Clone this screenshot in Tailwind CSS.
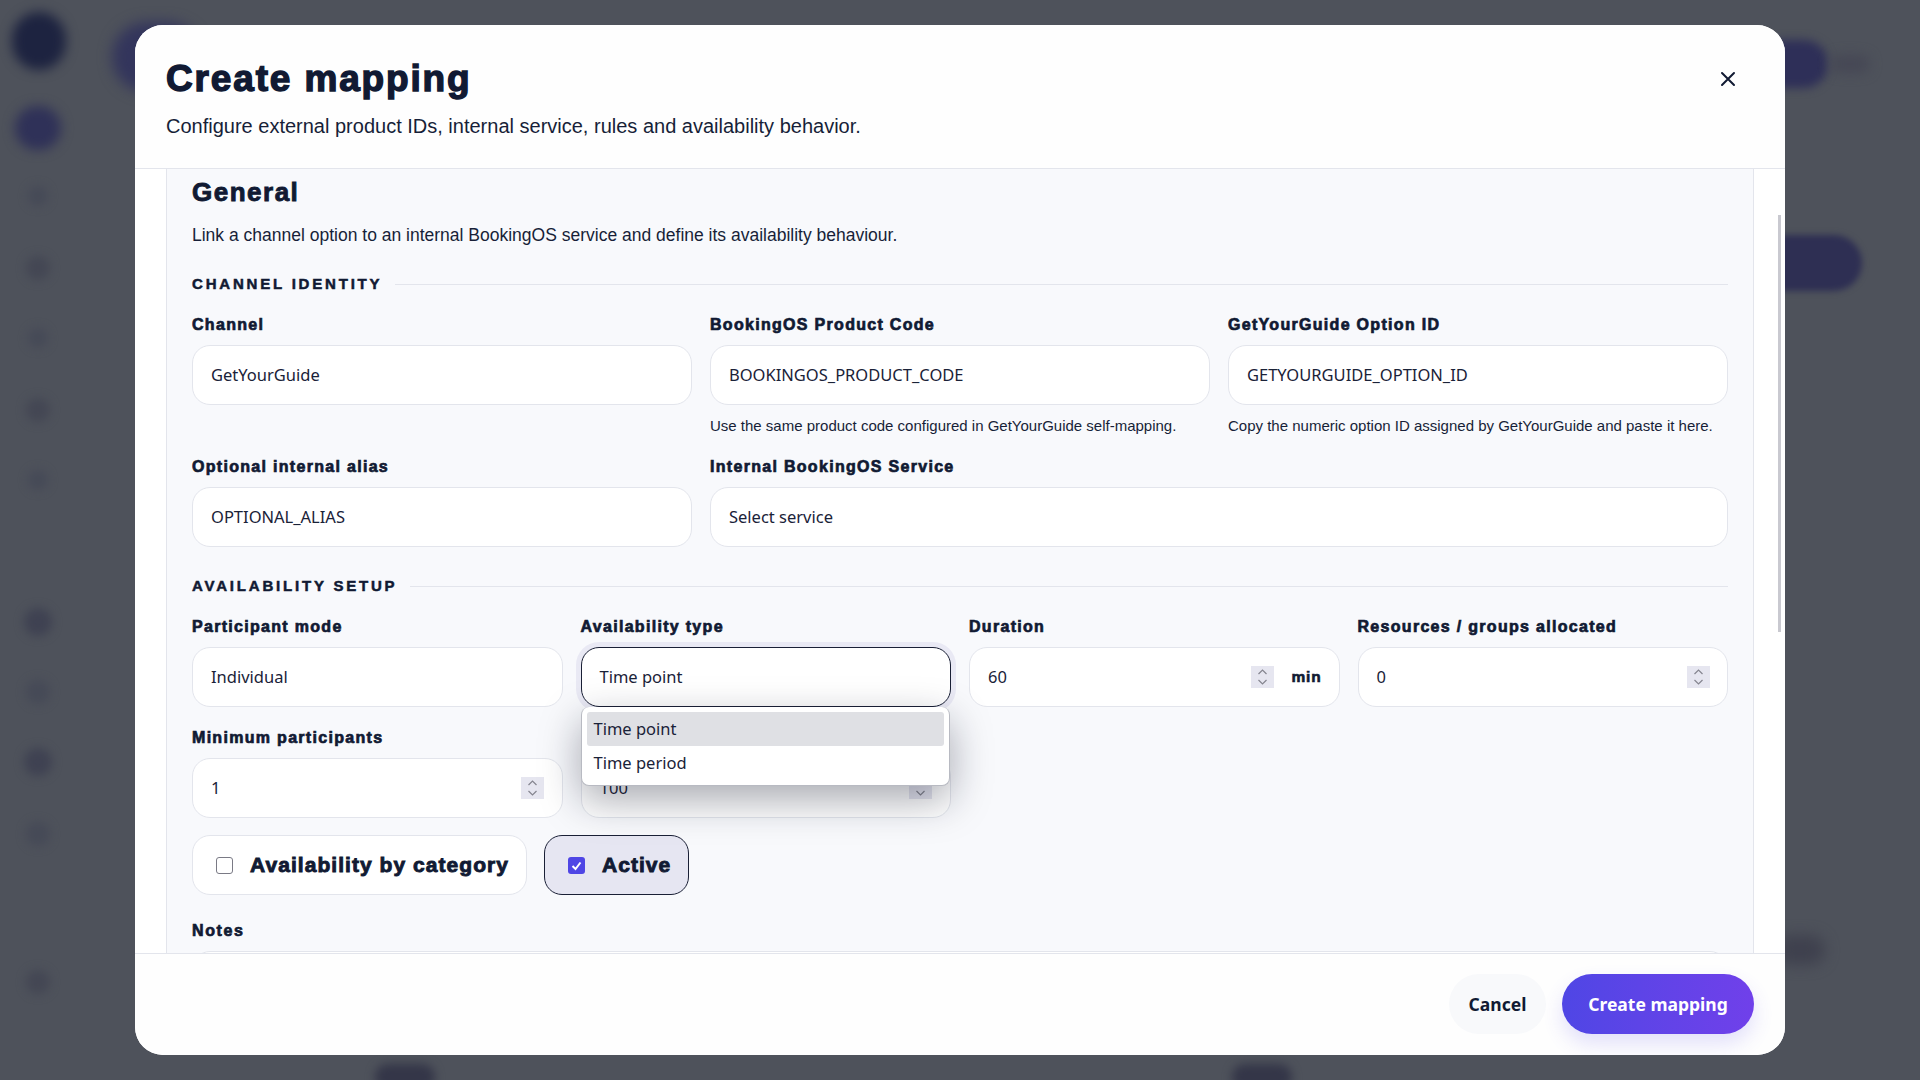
<!DOCTYPE html>
<html lang="en">
<head>
  <meta charset="UTF-8">
  <title>Create mapping</title>
  <script src="https://cdn.jsdelivr.net/npm/@tailwindcss/browser@4"></script>
</head>
<body class="bg-[#4e525b]">
  <div class="relative w-[1920px] h-[1080px] overflow-hidden font-['Liberation_Sans',sans-serif] text-[#111a33]">

    <!-- blurred page behind the modal -->
    <div class="absolute left-[12px] top-[12px] w-[54px] h-[58px] rounded-full bg-[#1d2340] blur-[6px]"></div>
    <div class="absolute left-[15px] top-[106px] w-[46px] h-[44px] rounded-full bg-[#2f3158] blur-[6px]"></div>
    <div class="absolute left-[112px] top-[22px] w-[90px] h-[70px] rounded-full bg-[#33355c] blur-[7px]"></div>
    <div class="absolute left-[1760px] top-[40px] w-[68px] h-[48px] rounded-full bg-[#2e2f58] blur-[5px]"></div>
    <div class="absolute left-[1700px] top-[235px] w-[162px] h-[56px] rounded-full bg-[#2e2f53] blur-[3px]"></div>
    <div class="absolute left-[1830px] top-[55px] w-[40px] h-[18px] rounded-full bg-[#464855] blur-[6px]"></div>
    <div class="absolute left-[1775px] top-[935px] w-[50px] h-[30px] rounded-full bg-[#3f414e] blur-[7px]"></div>
    <div class="absolute left-[375px] top-[1064px] w-[60px] h-[26px] rounded-full bg-[#343648] blur-[5px]"></div>
    <div class="absolute left-[1232px] top-[1064px] w-[60px] h-[26px] rounded-full bg-[#343648] blur-[5px]"></div>
    <div class="absolute left-[28px] top-[186px] w-[20px] h-[20px] rounded-full bg-[#464a57] blur-[5px]"></div>
    <div class="absolute left-[26px] top-[256px] w-[24px] h-[24px] rounded-full bg-[#444754] blur-[5px]"></div>
    <div class="absolute left-[28px] top-[328px] w-[20px] h-[20px] rounded-full bg-[#464a57] blur-[5px]"></div>
    <div class="absolute left-[26px] top-[398px] w-[24px] h-[24px] rounded-full bg-[#444754] blur-[5px]"></div>
    <div class="absolute left-[28px] top-[470px] w-[20px] h-[20px] rounded-full bg-[#464a57] blur-[5px]"></div>
    <div class="absolute left-[24px] top-[608px] w-[28px] h-[28px] rounded-full bg-[#3f4252] blur-[5px]"></div>
    <div class="absolute left-[26px] top-[680px] w-[24px] h-[24px] rounded-full bg-[#464a57] blur-[5px]"></div>
    <div class="absolute left-[24px] top-[748px] w-[28px] h-[28px] rounded-full bg-[#3f4252] blur-[5px]"></div>
    <div class="absolute left-[26px] top-[822px] w-[24px] h-[24px] rounded-full bg-[#464a57] blur-[5px]"></div>
    <div class="absolute left-[26px] top-[970px] w-[24px] h-[24px] rounded-full bg-[#444754] blur-[5px]"></div>

    <!-- modal -->
    <div class="absolute left-[135px] top-[25px] w-[1650px] h-[1030px] rounded-[28px] bg-white flex flex-col overflow-hidden">

      <header class="relative h-[144px] shrink-0 border-b border-[#e3e5ec] bg-[#fefefe] pl-[31px] pr-[31px]">
        <h1 class="pt-[32px] text-[37px] leading-[44px] font-bold tracking-[1.85px] [-webkit-text-stroke:1.4px_#111a33]">Create mapping</h1>
        <p class="mt-[11px] text-[20px] leading-[28px] text-[#171f38]">Configure external product IDs, internal service, rules and availability behavior.</p>
        <button class="absolute left-[1584px] top-[45px] w-[18px] h-[18px] flex items-center justify-center">
          <svg width="16" height="16" viewBox="0 0 16 16" fill="none" stroke="#111a33" stroke-width="2" stroke-linecap="round"><path d="M2 2l12 12M14 2L2 14"/></svg>
        </button>
      </header>

      <div class="relative flex-1 overflow-hidden px-[31px]">
        <section class="border-x border-[#e3e5ec] bg-[#f8f9fc] px-[25px] pt-[7px] h-[900px]">
          <h2 class="text-[26px] leading-[32px] font-bold tracking-[1.5px] [-webkit-text-stroke:0.9px_#111a33]">General</h2>
          <p class="mt-[14px] text-[17.5px] leading-[26px] text-[#171f38]">Link a channel option to an internal BookingOS service and define its availability behaviour.</p>

          <div class="mt-[26px] flex items-center gap-[13px]">
            <span class="text-[15px] leading-[20px] font-bold tracking-[2.8px] [-webkit-text-stroke:0.5px_#111a33]">CHANNEL IDENTITY</span>
            <div class="h-px flex-1 bg-[#e3e5ec]"></div>
          </div>

          <div class="mt-[20px] grid grid-cols-3 gap-x-[18px] gap-y-[20px]">
            <div>
              <label class="block text-[16px] leading-[21px] font-bold tracking-[1.3px] [-webkit-text-stroke:0.7px_#111a33] mb-[10px]">Channel</label>
              <div class="h-[60px] flex items-center rounded-[18px] border border-[#e3e5ec] bg-white px-[18px] font-['Noto_Sans',sans-serif] text-[16.5px] text-[#1a2238]">GetYourGuide</div>
            </div>
            <div>
              <label class="block text-[16px] leading-[21px] font-bold tracking-[1.3px] [-webkit-text-stroke:0.7px_#111a33] mb-[10px]">BookingOS Product Code</label>
              <div class="h-[60px] flex items-center rounded-[18px] border border-[#e3e5ec] bg-white px-[18px] font-['Noto_Sans',sans-serif] text-[16.5px] text-[#1a2238]">BOOKINGOS_PRODUCT_CODE</div>
              <p class="mt-[11px] text-[15px] leading-[20px] text-[#171f38]">Use the same product code configured in GetYourGuide self-mapping.</p>
            </div>
            <div>
              <label class="block text-[16px] leading-[21px] font-bold tracking-[1.3px] [-webkit-text-stroke:0.7px_#111a33] mb-[10px]">GetYourGuide Option ID</label>
              <div class="h-[60px] flex items-center rounded-[18px] border border-[#e3e5ec] bg-white px-[18px] font-['Noto_Sans',sans-serif] text-[16.5px] text-[#1a2238]">GETYOURGUIDE_OPTION_ID</div>
              <p class="mt-[11px] text-[15px] leading-[20px] text-[#171f38]">Copy the numeric option ID assigned by GetYourGuide and paste it here.</p>
            </div>
            <div>
              <label class="block text-[16px] leading-[21px] font-bold tracking-[1.3px] [-webkit-text-stroke:0.7px_#111a33] mb-[10px]">Optional internal alias</label>
              <div class="h-[60px] flex items-center rounded-[18px] border border-[#e3e5ec] bg-white px-[18px] font-['Noto_Sans',sans-serif] text-[16.5px] text-[#1a2238]">OPTIONAL_ALIAS</div>
            </div>
            <div class="col-span-2">
              <label class="block text-[16px] leading-[21px] font-bold tracking-[1.3px] [-webkit-text-stroke:0.7px_#111a33] mb-[10px]">Internal BookingOS Service</label>
              <div class="h-[60px] flex items-center rounded-[18px] border border-[#e3e5ec] bg-white px-[18px] font-['Noto_Sans',sans-serif] text-[16.5px] text-[#1a2238]">Select service</div>
            </div>
          </div>

          <div class="mt-[29px] flex items-center gap-[13px]">
            <span class="text-[15px] leading-[20px] font-bold tracking-[2.8px] [-webkit-text-stroke:0.5px_#111a33]">AVAILABILITY SETUP</span>
            <div class="h-px flex-1 bg-[#e3e5ec]"></div>
          </div>

          <div class="mt-[20px] grid grid-cols-4 gap-x-[18px] gap-y-[20px]">
            <div>
              <label class="block text-[16px] leading-[21px] font-bold tracking-[1.3px] [-webkit-text-stroke:0.7px_#111a33] mb-[10px]">Participant mode</label>
              <div class="h-[60px] flex items-center rounded-[18px] border border-[#e3e5ec] bg-white px-[18px] font-['Noto_Sans',sans-serif] text-[16.5px] text-[#1a2238]">Individual</div>
            </div>
            <div class="relative z-10">
              <label class="block text-[16px] leading-[21px] font-bold tracking-[1.3px] [-webkit-text-stroke:0.7px_#111a33] mb-[10px]">Availability type</label>
              <div class="h-[60px] flex items-center rounded-[18px] border border-[#1a2036] bg-white px-[18px] font-['Noto_Sans',sans-serif] text-[16.5px] text-[#1a2238] shadow-[0_0_0_5px_#e9e9f4]">Time point</div>
              <!-- open select list -->
              <div class="absolute left-0 top-[91px] w-[369px] h-[79px] rounded-[8px] bg-white p-[5px] font-['Noto_Sans',sans-serif] text-[16.5px] text-[#1a2238] border border-[#b8bac2] border-t-0 shadow-[0_14px_40px_rgba(15,20,40,0.36)]">
                <div class="h-[34px] flex items-center rounded-[3px] bg-[#dfe0e4] px-[7px]">Time point</div>
                <div class="h-[34px] flex items-center px-[7px]">Time period</div>
              </div>
            </div>
            <div>
              <label class="block text-[16px] leading-[21px] font-bold tracking-[1.3px] [-webkit-text-stroke:0.7px_#111a33] mb-[10px]">Duration</label>
              <div class="h-[60px] flex items-center rounded-[18px] border border-[#e3e5ec] bg-white pl-[18px] pr-[17px] font-['Noto_Sans',sans-serif] text-[16.5px] text-[#1a2238]">
                <span class="flex-1">60</span>
                <span class="w-[23px] h-[22px] bg-[#e6e6f0] flex items-center justify-center"><svg width="23" height="22" viewBox="0 0 23 22" fill="none" stroke="#85858f" stroke-width="1.2"><path d="M7.5 8l4-4 4 4M7.5 14l4 4 4-4"/></svg></span>
                <span class="ml-[18px] font-['Liberation_Sans',sans-serif] text-[15.5px] font-bold tracking-[0.8px] [-webkit-text-stroke:0.6px_#111a33] text-[#111a33]">min</span>
              </div>
            </div>
            <div>
              <label class="block text-[16px] leading-[21px] font-bold tracking-[1.3px] [-webkit-text-stroke:0.7px_#111a33] mb-[10px]">Resources / groups allocated</label>
              <div class="h-[60px] flex items-center rounded-[18px] border border-[#e3e5ec] bg-white pl-[18px] pr-[17px] font-['Noto_Sans',sans-serif] text-[16.5px] text-[#1a2238]">
                <span class="flex-1">0</span>
                <span class="w-[23px] h-[22px] bg-[#e6e6f0] flex items-center justify-center"><svg width="23" height="22" viewBox="0 0 23 22" fill="none" stroke="#85858f" stroke-width="1.2"><path d="M7.5 8l4-4 4 4M7.5 14l4 4 4-4"/></svg></span>
              </div>
            </div>
            <div>
              <label class="block text-[16px] leading-[21px] font-bold tracking-[1.3px] [-webkit-text-stroke:0.7px_#111a33] mb-[10px]">Minimum participants</label>
              <div class="h-[60px] flex items-center rounded-[18px] border border-[#e3e5ec] bg-white pl-[18px] pr-[18px] font-['Noto_Sans',sans-serif] text-[16.5px] text-[#1a2238]">
                <span class="flex-1">1</span>
                <span class="w-[23px] h-[22px] bg-[#e6e6f0] flex items-center justify-center"><svg width="23" height="22" viewBox="0 0 23 22" fill="none" stroke="#85858f" stroke-width="1.2"><path d="M7.5 8l4-4 4 4M7.5 14l4 4 4-4"/></svg></span>
              </div>
            </div>
            <div>
              <div class="h-[21px] mb-[10px]"></div>
              <div class="h-[60px] flex items-center rounded-[18px] border border-[#e3e5ec] bg-white pl-[18px] pr-[18px] font-['Noto_Sans',sans-serif] text-[16.5px] text-[#1a2238]">
                <span class="flex-1">100</span>
                <span class="w-[23px] h-[22px] bg-[#e6e6f0] flex items-center justify-center"><svg width="23" height="22" viewBox="0 0 23 22" fill="none" stroke="#85858f" stroke-width="1.2"><path d="M7.5 8l4-4 4 4M7.5 14l4 4 4-4"/></svg></span>
              </div>
            </div>
          </div>

          <div class="mt-[17px] flex gap-[17px]">
            <label class="h-[60px] w-[335px] flex items-center gap-[17px] rounded-[18px] border border-[#e3e5ec] bg-white pl-[23px]">
              <span class="w-[17px] h-[17px] rounded-[3px] border border-[#7a7a85] bg-white"></span>
              <span class="text-[21px] font-bold tracking-[1.05px] [-webkit-text-stroke:0.9px_#111a33]">Availability by category</span>
            </label>
            <label class="h-[60px] w-[145px] flex items-center gap-[17px] rounded-[18px] border border-[#1a2036] bg-[#e6e6f2] pl-[23px]">
              <span class="w-[17px] h-[17px] rounded-[3px] bg-[#4f46e5] flex items-center justify-center">
                <svg width="13" height="13" viewBox="0 0 13 13" fill="none" stroke="#fff" stroke-width="2"><path d="M2.5 7l3 3 5-6.5"/></svg>
              </span>
              <span class="text-[21px] font-bold tracking-[1.05px] [-webkit-text-stroke:0.9px_#111a33]">Active</span>
            </label>
          </div>

          <label class="mt-[25px] block text-[16px] leading-[21px] font-bold tracking-[1.6px] [-webkit-text-stroke:0.7px_#111a33] mb-[10px]">Notes</label>
          <div class="h-[120px] rounded-[18px] border border-[#e3e5ec] bg-white"></div>
        </section>
        <div class="absolute left-[1643px] top-[46px] w-[3px] h-[417px] bg-[#c9c9d0]"></div>
      </div>

      <footer class="h-[102px] shrink-0 border-t border-[#e3e5ec] bg-[#fefefe] flex justify-end items-start gap-[16px] pt-[20px] pr-[31px]">
        <button class="h-[60px] w-[97px] rounded-full bg-[#f8f9fb] font-['Noto_Sans',sans-serif] text-[17.5px] font-bold text-[#111a33]">Cancel</button>
        <button class="h-[60px] w-[192px] rounded-full bg-linear-to-r from-[#4f46e5] to-[#7040ea] font-['Noto_Sans',sans-serif] text-[17.5px] font-bold text-white shadow-[0_10px_20px_rgba(79,70,229,0.16)]">Create mapping</button>
      </footer>
    </div>
  </div>
</body>
</html>
